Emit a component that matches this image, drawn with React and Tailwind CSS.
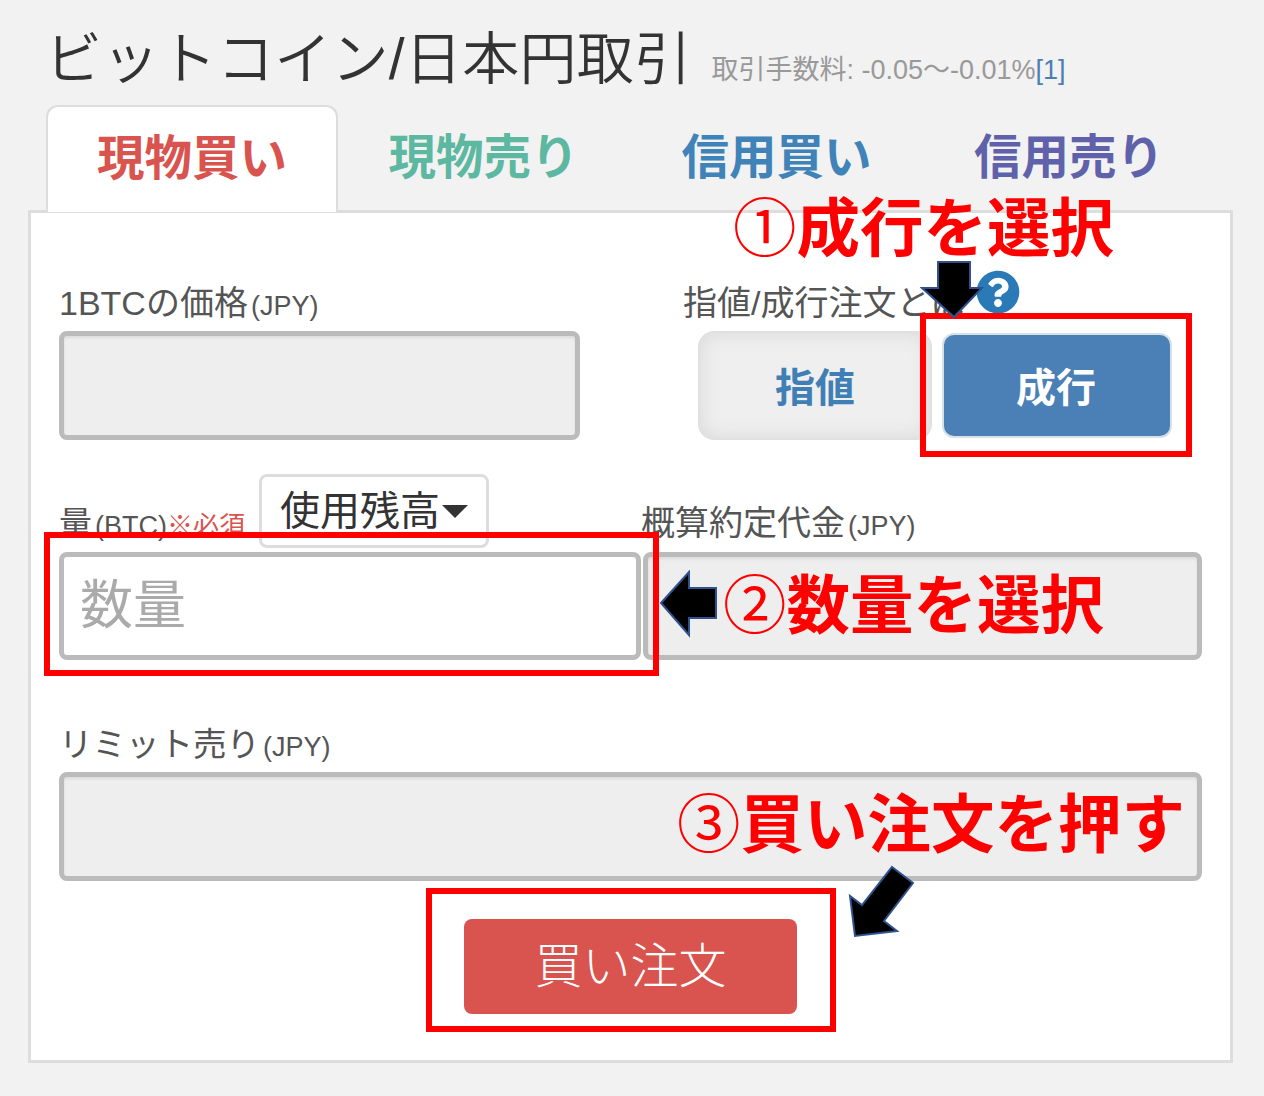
import React from "react";
import { FaQuestionCircle } from "react-icons/fa";

const TABS = [
  { label: "現物買い", width: "w-[292px]", color: "text-[#d9534f]", active: true },
  { label: "現物売り", width: "w-[291px]", color: "text-[#5cb8a0]" },
  { label: "信用買い", width: "w-[295px]", color: "text-[#3f83b8]" },
  { label: "信用売り", width: "w-[290px]", color: "text-[#5f62ab]" },
];

const Unit = ({ children }) => <span className="ml-[3px] text-[27px]">{children}</span>;

const ReadOnlyInput = ({ className }) => (
  <div className={`border-[5px] border-[#bbbbbb] rounded-lg bg-[#eeeeee] shadow-[inset_0_2px_3px_rgba(0,0,0,0.08)] ${className}`} />
);

const Arrow = ({ className, viewBox, points }) => (
  <svg className={`absolute ${className}`} viewBox={viewBox}>
    <polygon points={points} fill="#000" stroke="#2f528f" strokeWidth="2" />
  </svg>
);

const Note = ({ className, mark, children }) => (
  <div className={`absolute text-[63.5px] leading-none font-bold text-[#ff0000] whitespace-nowrap ${className}`}>
    <span className="font-normal">{mark}</span>
    {children}
  </div>
);

const RedBox = ({ className }) => (
  <div className={`absolute border-[6px] border-[#ff0000] ${className}`} />
);

export default function App() {
  return (
    <div className="relative w-[1264px] h-[1096px] overflow-hidden bg-[#f2f2f2] font-['Liberation_Sans','Noto_Sans_CJK_JP',sans-serif] text-[#333]">
      {/* Title */}
      <div className="h-[105px] pl-[45px] flex items-baseline pt-[19px]">
        <h1 className="text-[57px] leading-[80px] font-[350] tracking-[0.3px] whitespace-nowrap">
          ビットコイン/日本円取引
        </h1>
        <span className="ml-[20px] text-[27px] text-[#999] whitespace-nowrap">
          取引手数料: -0.05〜-0.01%<span className="text-[#4a7fb0]">[1]</span>
        </span>
      </div>

      {/* Tabs */}
      <div className="relative z-10 flex pl-[46px] h-[107px]">
        {TABS.map((tab) => (
          <div
            key={tab.label}
            className={`${tab.width} flex justify-center pt-[22px] text-[47.5px] leading-[60px] font-bold ${tab.color} ${
              tab.active ? "bg-white border-2 border-b-0 border-[#dddddd] rounded-t-xl" : "mt-[1px]"
            }`}
          >
            {tab.label}
          </div>
        ))}
      </div>

      {/* Panel */}
      <div className="relative -mt-[2px] ml-[28px] w-[1205px] h-[853px] bg-white border-[3px] border-[#dddddd] px-[28px]">
        {/* Price row */}
        <div className="flex h-[227px] pt-[67px]">
          <div className="w-[521px]">
            <div className="h-[51px] text-[34px] leading-[46px] text-[#555] whitespace-nowrap">
              1BTCの価格<Unit>(JPY)</Unit>
            </div>
            <ReadOnlyInput className="h-[109px]" />
          </div>
          <div className="ml-[103px]">
            <div className="h-[51px] text-[34px] leading-[46px] text-[#555] flex items-start whitespace-nowrap">
              指値/成行注文とは
              <FaQuestionCircle className="ml-[12px] -mt-[10px] text-[44px] text-[#2a7ab8]" />
            </div>
            <div className="flex items-center ml-[15px] h-[109px]">
              <div className="w-[234px] h-[109px] pt-[4px] rounded-2xl bg-[#efefef] shadow-[inset_0_0_20px_#d8d8d8] border-2 border-[#e0e0e0] flex items-center justify-center text-[40px] font-bold text-[#3f7fb5]">
                指値
              </div>
              <div className="ml-[10px] w-[230px] h-[105px] pt-[4px] pr-[2px] rounded-xl bg-[#4a80b5] border-2 border-[#d5e0ea] flex items-center justify-center text-[40px] font-bold text-white">
                成行
              </div>
            </div>
          </div>
        </div>

        {/* Amount row */}
        <div className="flex mt-[34px] h-[251px]">
          <div className="w-[584px]">
            <div className="flex h-[78px]">
              <div className="w-[200px] pt-[27px] text-[33px] leading-[46px] text-[#555] whitespace-nowrap">
                量<Unit>(BTC)</Unit>
                <span className="text-[26px] text-[#d9534f]">※必須</span>
              </div>
              <div className="w-[230px] h-[74px] border-[3px] border-[#dddddd] rounded-lg bg-white flex items-center justify-center text-[40px] whitespace-nowrap">
                使用残高
                <span className="ml-[2px] w-0 h-0 border-x-[13px] border-x-transparent border-t-[13px] border-t-[#333]" />
              </div>
            </div>
            <div className="h-[108px] w-[582px] border-[5px] border-[#bbbbbb] rounded-lg bg-white flex items-center pl-[16px] text-[53px] text-[#aaaaaa]">
              数量
            </div>
          </div>
          <div className="flex-1">
            <div className="h-[78px] pt-[26px] -ml-[2px] text-[34px] leading-[46px] text-[#555] whitespace-nowrap">
              概算約定代金<Unit>(JPY)</Unit>
            </div>
            <ReadOnlyInput className="h-[108px]" />
          </div>
        </div>

        {/* Limit row */}
        <div className="h-[47px] text-[33.5px] leading-[40px] text-[#555] whitespace-nowrap">
          リミット売り<Unit>(JPY)</Unit>
        </div>
        <ReadOnlyInput className="h-[109px]" />

        {/* Submit */}
        <div className="mt-[38px] ml-[405px] w-[333px] h-[95px] rounded-lg bg-[#d9534f] flex items-center justify-center text-[48px] font-light text-white">
          買い注文
        </div>
      </div>

      {/* Annotations */}
      <RedBox className="left-[920px] top-[313px] w-[272px] h-[144px]" />
      <RedBox className="left-[44px] top-[532px] w-[615px] h-[144px]" />
      <RedBox className="left-[426px] top-[888px] w-[410px] h-[144px]" />

      <Note className="left-[733px] top-[198px]" mark="①">成行を選択</Note>
      <Note className="left-[723px] top-[575px]" mark="②">数量を選択</Note>
      <Note className="left-[677px] top-[794px]" mark="③">買い注文を押す</Note>

      <Arrow
        className="left-[920px] top-[260px] w-[64px] h-[60px]"
        viewBox="920 260 64 60"
        points="938,262 970,262 970,288 982,288 954,317 922,288 938,288"
      />
      <Arrow
        className="left-[658px] top-[570px] w-[60px] h-[68px]"
        viewBox="658 570 60 68"
        points="661,603 689,572 689,588 716,588 716,618 689,618 689,635"
      />
      <Arrow
        className="left-[848px] top-[864px] w-[68px] h-[74px]"
        viewBox="848 864 68 74"
        points="892,867 913,883 884,921 897,931 855,936 850,896 862,905"
      />
    </div>
  );
}
